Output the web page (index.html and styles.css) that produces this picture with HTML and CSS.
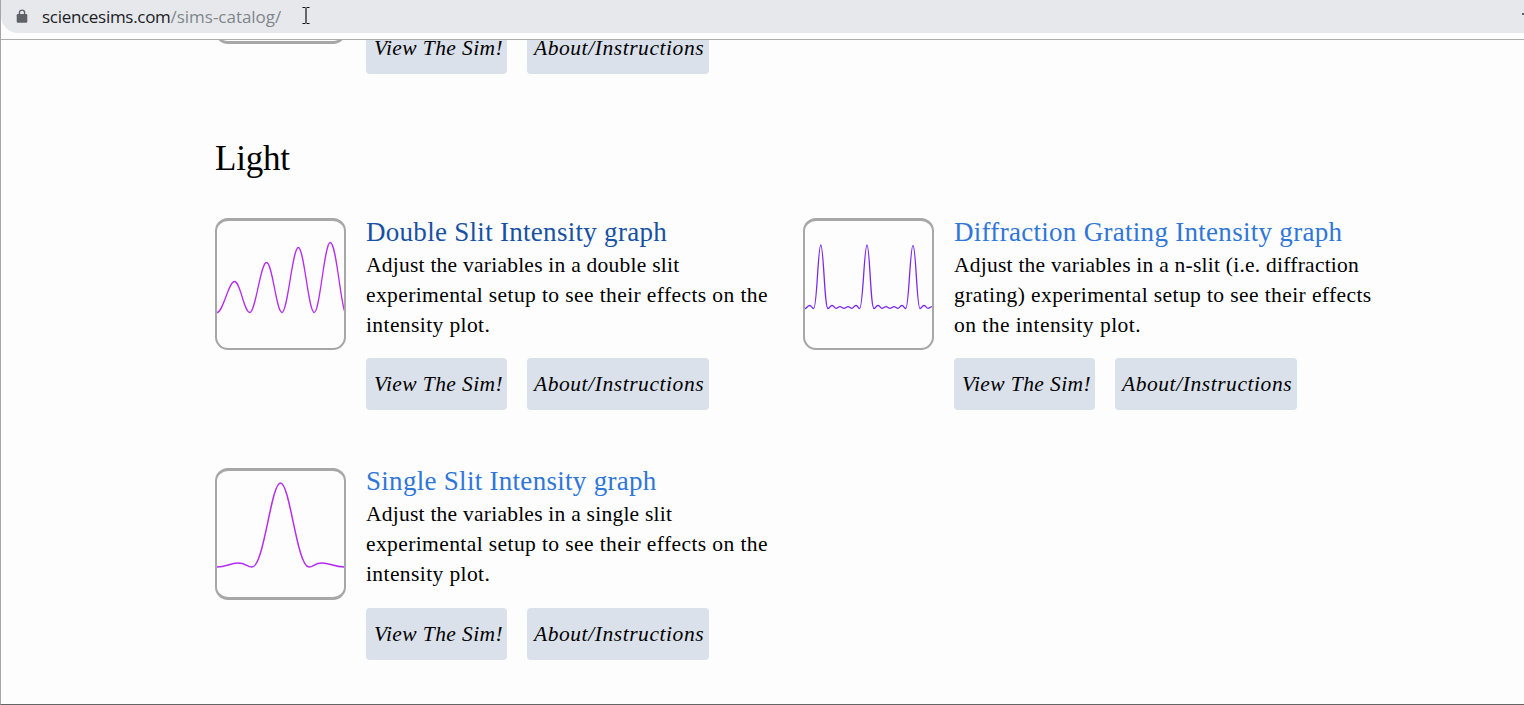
FILE: index.html
```
<!DOCTYPE html>
<html lang="en">
<head>
<meta charset="utf-8">
<title>Sims Catalog</title>
<link rel="stylesheet" href="styles.css">
</head>
<body>
<div class="browser">
  <header class="toolbar">
    <div class="address">
      <svg class="lock" width="12" height="14" viewBox="0 0 12 14"><path d="M3.4 6V3.7a2.6 2.6 0 0 1 5.2 0V6" fill="none" stroke="#5f6368" stroke-width="1.4"/><rect x=".7" y="5" width="10.6" height="8.7" rx="1.2" fill="#5f6368"/></svg>
      <span class="domain">sciencesims.com</span><span class="path">/sims-catalog/</span>
      <svg class="cursor" width="8" height="17" viewBox="0 0 8 17"><path d="M.5 .5H3.5M4.5 .5H7.5M4 1V16M.5 16.5H3.5M4.5 16.5H7.5" fill="none" stroke="#111" stroke-width="1.2"/></svg>
      <i class="edge-mark"></i>
    </div>
  </header>
  <main class="page">
    <article class="sim sim-cut">
      <div class="thumb thick"></div>
      <div class="info"><div class="buttons"><a class="button view">View The Sim!</a><a class="button about">About/Instructions</a></div></div>
    </article>
    <h2 class="section-title">Light</h2>
    <section class="grid">
      <article class="sim">
        <svg class="thumb" viewBox="217 221 127 127"><path class="violet" d="M217 312.500C223.200 312.500 228.500 281.500 234.500 281.500S244 312.500 249.800 312.500S260.500 262.500 266.500 262.500S276.300 312.500 282 312.500S292.500 247.500 298.300 247.500S308.500 312.500 314.200 312.500S324.400 242.500 330.200 242.500C336 242.500 339.500 294 344.500 311"/></svg>
        <div class="info">
          <h3 class="name visited">Double Slit Intensity graph</h3>
          <p class="text"><span class="tight">Adjust the variables in a double slit</span><br>experimental setup to see their effects on the<br>intensity plot.</p>
          <div class="buttons"><a class="button view">View The Sim!</a><a class="button about">About/Instructions</a></div>
        </div>
      </article>
      <article class="sim">
        <svg class="thumb" viewBox="805 221 127 127"><path class="indigo" d="M805 308.500C807 308.500 807.500 305.500 809.500 305.500S812 308.500 813.700 308.500C817 308.500 818 245 820.800 245S824.500 308.500 828 308.500C829.700 308.500 830 305.500 832 305.500S834.500 308.300 836 308.300S838.500 306.700 840 306.700S842.500 308.300 844 308.300S846.500 306.700 848 306.700S850.500 308.300 852 308.300S854 305.500 856 305.500S858 308.500 859.700 308.500C863 308.500 864.200 245 867 245S870.500 308.500 874 308.500C875.700 308.500 876 305.500 878 305.500S880.500 308.300 882 308.300S884.500 306.700 886 306.700S888.500 308.300 890 308.300S892.500 306.700 894 306.700S896.500 308.300 898 308.300S900 305.500 902 305.500S904 308.500 905.700 308.500C909 308.500 910 245.500 913 245.500S916.700 308.500 920 308.500C921.700 308.500 922 305.500 924 305.500S926.500 308.300 928 308.300S930 306.500 933 306.500"/></svg>
        <div class="info">
          <h3 class="name">Diffraction Grating Intensity graph</h3>
          <p class="text"><span class="tight">Adjust the variables in a n-slit (i.e. diffraction</span><br>grating) experimental setup to see their effects<br><span class="loose">on the intensity plot.</span></p>
          <div class="buttons"><a class="button view">View The Sim!</a><a class="button about">About/Instructions</a></div>
        </div>
      </article>
      <article class="sim lower">
        <svg class="thumb thick" viewBox="217 471 127 126"><path class="violet bold" d="M217 567C226 567 230 563 238 563S247 567 252 567C264 567 271 483 280.500 483S297 567 309 567C314 567 314 563 322 563S334 567 344 567"/></svg>
        <div class="info">
          <h3 class="name">Single Slit Intensity graph</h3>
          <p class="text"><span class="tight">Adjust the variables in a single slit</span><br>experimental setup to see their effects on the<br>intensity plot.</p>
          <div class="buttons"><a class="button view">View The Sim!</a><a class="button about">About/Instructions</a></div>
        </div>
      </article>
    </section>
  </main>
</div>
</body>
</html>
```
FILE: styles.css
```
* { box-sizing: border-box; }
body { margin: 0; background: #fdfdfd; color: #000; font-family: "Liberation Serif", serif; overflow: hidden; }
.browser { height: 705px; display: flex; flex-direction: column; border-left: 1px solid #a6a6a6; border-bottom: 1px solid #656565; }
.toolbar { flex: none; height: 40px; border-bottom: 1px solid #adadad; }
.address { height: 33px; display: flex; align-items: center; padding-left: 15px; background: #e7e8ec; border-bottom-left-radius: 17px; font: 17px "Open Sans", sans-serif; color: #202124; }
.lock { margin-right: 14px; margin-top: -2px; }
.domain, .path { margin-top: -1px; }
.domain { letter-spacing: -.3px; }
.path { color: #80868b; letter-spacing: -.02px; }
.cursor { margin-left: 21px; margin-top: -2px; }
.edge-mark { width: 2px; height: 2px; margin: -6px 0 0 auto; background: #5f6368; }
.page { flex: 1; min-height: 0; overflow: hidden; padding-left: 214px; }
.sim { display: flex; gap: 20px; width: 568px; }
.thumb { flex: none; width: 131px; height: 132px; border: 2px solid #a7a7a7; border-top-width: 3px; border-radius: 13px; }
.thick { border-bottom-width: 3px; }
.sim-cut { height: 34px; align-items: flex-end; }
.sim-cut .thumb { margin-bottom: 30px; }
.section-title { margin: 64px 0 38px; font-size: 35px; line-height: 42px; font-weight: 400; letter-spacing: -.2px; }
.grid { display: grid; grid-template-columns: 568px 568px; column-gap: 20px; row-gap: 58px; }
.info { width: 417px; flex: none; }
.name { margin: -2px 0 0; font-size: 27px; line-height: 32px; font-weight: 400; color: #2f76d9; white-space: nowrap; letter-spacing: .29px; }
.visited { color: #1751a4; }
.text { margin: 2px 0 18px; font-size: 21.5px; line-height: 30px; white-space: nowrap; letter-spacing: .4px; }
.tight { letter-spacing: .24px; }
.loose { letter-spacing: .47px; }
.lower .name { margin-top: -3px; }
.lower .text { margin-bottom: 19px; }
.buttons { display: flex; gap: 20px; }
.button { height: 52px; line-height: 52px; border-radius: 4px; background: #dae1ea; font-size: 21.5px; font-style: italic; white-space: nowrap; }
.view { width: 141px; padding-left: 8px; letter-spacing: .4px; }
.about { width: 182px; padding-left: 7px; letter-spacing: .56px; }
.violet, .indigo { fill: none; stroke: #b52df0; stroke-width: 1.3; }
.bold { stroke-width: 1.5; }
.indigo { stroke: #7b28ee; }
```
